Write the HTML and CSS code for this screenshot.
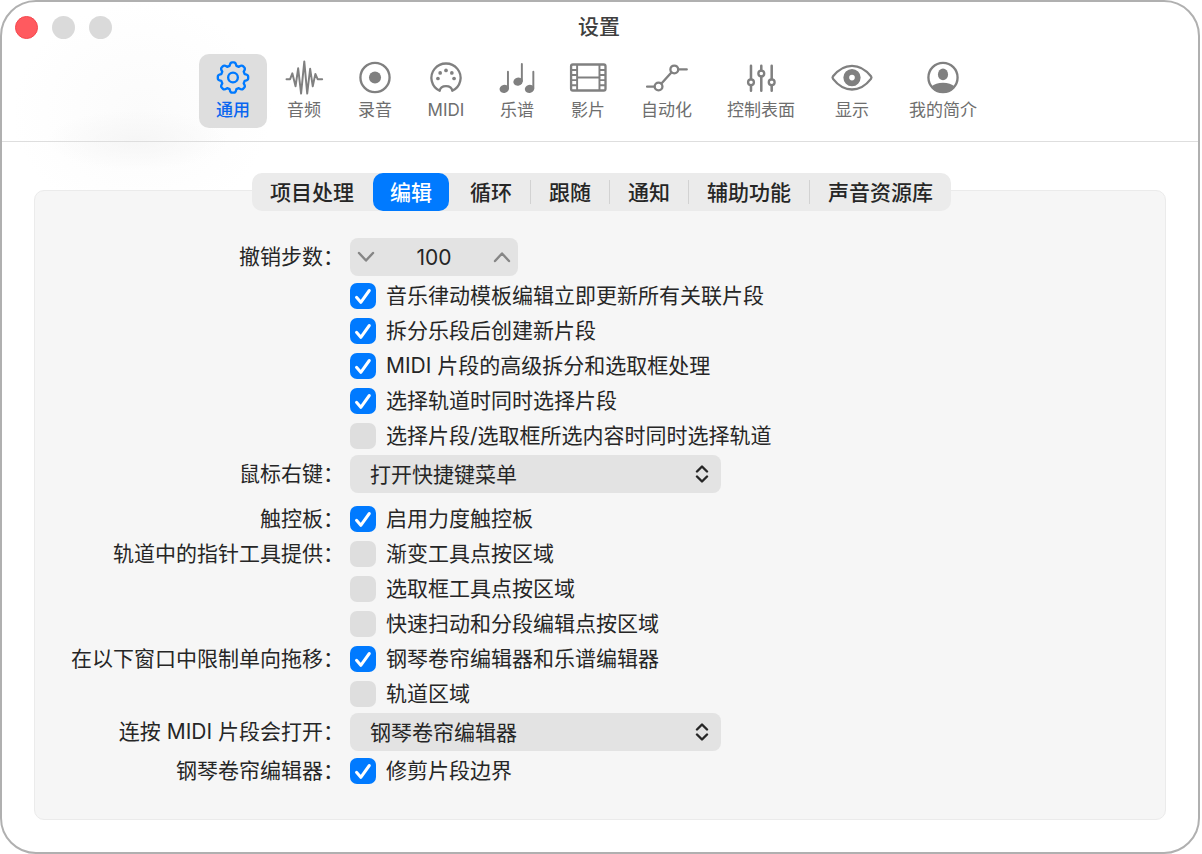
FILE: index.html
```html
<!DOCTYPE html>
<html lang="zh-CN">
<head>
    <meta charset="UTF-8">
    <meta name="viewport" content="width=device-width, initial-scale=1.0">
    <title>设置</title>
    <link rel="stylesheet" href="styles.css">
</head>
<body>
    <div class="window">
        <header class="header">
            <div class="titlebar">
                <div class="lights">
                    <button type="button" class="light close" aria-label="关闭"></button>
                    <button type="button" class="light" aria-label="最小化" disabled></button>
                    <button type="button" class="light" aria-label="缩放" disabled></button>
                </div>
                <h1>设置</h1>
            </div>
            <nav class="toolbar">
                <button type="button" class="tool active">
                    <svg viewBox="0 0 44 36"><g transform="translate(22 18)">
                        <path d="M-3.5-12Q-2.8-15.6-1-15.6L1-15.6Q2.8-15.6 3.5-12L6-11Q9-13 10.3-11.7L11.7-10.3Q13-9 11-6L12-3.5Q15.6-2.8 15.6-1L15.6 1Q15.6 2.8 12 3.5L11 6Q13 9 11.7 10.3L10.3 11.7Q9 13 6 11L3.5 12Q2.8 15.6 1 15.6L-1 15.6Q-2.8 15.6-3.5 12L-6 11Q-9 13-10.3 11.7L-11.7 10.3Q-13 9-11 6L-12 3.5Q-15.6 2.8-15.6 1L-15.6-1Q-15.6-2.8-12-3.5L-11-6Q-13-9-11.7-10.3L-10.3-11.7Q-9-13-6-11Z"/>
                        <circle r="5"/></g></svg>
                    <span>通用</span>
                </button>
                <button type="button" class="tool">
                    <svg viewBox="0 0 44 36"><path d="M4 19.7H7.7L10 13.7 13.3 27 16 8.5 19 34.5 22.3 1.5 25.3 34.5 28.3 9 31 27 33.7 14.3 36 19.7H40.7" stroke-width="2"/></svg>
                    <span>音频</span>
                </button>
                <button type="button" class="tool">
                    <svg viewBox="0 0 44 36"><circle cx="22" cy="18" r="15"/><circle class="fill" cx="22" cy="18" r="6.2"/></svg>
                    <span>录音</span>
                </button>
                <button type="button" class="tool">
                    <svg viewBox="0 0 44 36"><path d="M15.5 31.7A15 14.8 0 1 1 28.5 31.7C27.5 25.2 16.5 25.2 15.5 31.7Z"/>
                        <g class="fill"><circle cx="13.7" cy="19" r="1.9"/><circle cx="16" cy="13.3" r="1.9"/><circle cx="22" cy="10.7" r="1.9"/><circle cx="28" cy="13.3" r="1.9"/><circle cx="30.3" cy="19" r="1.9"/></g></svg>
                    <span>MIDI</span>
                </button>
                <button type="button" class="tool">
                    <svg viewBox="0 0 44 36"><path d="M12.7 12V29M27 4V21.5M38.8 12V29" stroke-width="2"/>
                        <g class="fill"><ellipse cx="8.9" cy="29.7" rx="4.9" ry="4.1" transform="rotate(-15 8.9 29.7)"/><ellipse cx="23.1" cy="22.2" rx="4.9" ry="4.1" transform="rotate(-15 23.1 22.2)"/><ellipse cx="34.9" cy="29.7" rx="4.9" ry="4.1" transform="rotate(-15 34.9 29.7)"/></g></svg>
                    <span>乐谱</span>
                </button>
                <button type="button" class="tool">
                    <svg viewBox="0 0 44 36"><rect x="4.6" y="4.6" width="35.4" height="26.8" rx="1.8"/><path d="M10.8 5V31M33.8 5V31M11 18H34M5 10.3H10.5M5 15.5H10.5M5 20.7H10.5M5 25.9H10.5M34 10.3H39.5M34 15.5H39.5M34 20.7H39.5M34 25.9H39.5" stroke-width="2"/></svg>
                    <span>影片</span>
                </button>
                <button type="button" class="tool">
                    <svg viewBox="0 0 44 36"><path d="M1.5 27.3H9M16.3 24.2 26.5 12.8M33.8 9.7H42.3"/><circle cx="13.3" cy="27.3" r="4"/><circle cx="29.5" cy="9.7" r="4"/></svg>
                    <span>自动化</span>
                </button>
                <button type="button" class="tool">
                    <svg viewBox="0 0 44 36"><path d="M11.7 6V19.7M11.7 26.3V31.5M22.3 6V10.7M22.3 17.3V31.5M33 6V19.7M33 26.3V31.5" stroke-width="2.6"/><circle cx="11.7" cy="23" r="3"/><circle cx="22.3" cy="14" r="3"/><circle cx="33" cy="23" r="3"/></svg>
                    <span>控制表面</span>
                </button>
                <button type="button" class="tool wide">
                    <svg viewBox="0 0 44 36"><path d="M2.5 16.8C8 9.7 15 6 22 6S36 9.7 41.5 16.8Q42.5 18.1 41.5 19.4C36 26.5 29 30.3 22 30.3S8 26.5 2.5 19.4Q1.5 18.1 2.5 16.8Z"/><circle cx="22" cy="18.1" r="5.9" stroke-width="6"/></svg>
                    <span>显示</span>
                </button>
                <button type="button" class="tool">
                    <svg viewBox="0 0 44 36"><circle cx="22" cy="18" r="15"/><g class="fill"><ellipse cx="22" cy="14.8" rx="5.2" ry="6"/><path d="M9.6 27.5C13 24.5 17 23.3 22 23.3S31 24.5 34.4 27.5A15.5 15.5 0 0 1 9.6 27.5Z"/></g></svg>
                    <span>我的简介</span>
                </button>
            </nav>
        </header>

        <nav class="tabs">
            <button type="button" class="tab">项目处理</button>
            <button type="button" class="tab selected">编辑</button>
            <button type="button" class="tab">循环</button>
            <span class="divider"></span>
            <button type="button" class="tab">跟随</button>
            <span class="divider"></span>
            <button type="button" class="tab">通知</button>
            <span class="divider"></span>
            <button type="button" class="tab">辅助功能</button>
            <span class="divider"></span>
            <button type="button" class="tab">声音资源库</button>
        </nav>

        <main class="panel">
            <form class="settings">
                <label class="name" for="undo">撤销步数：</label>
                <div class="stepper">
                    <button type="button" aria-label="减少"><svg viewBox="0 0 18 12"><path d="M2 2 9 9.5 16 2"/></svg></button>
                    <input type="text" id="undo" value="100">
                    <button type="button" aria-label="增加"><svg viewBox="0 0 18 12"><path d="M2 10 9 2.5 16 10"/></svg></button>
                </div>

                <div class="options">
                    <label class="check"><input type="checkbox" checked>音乐律动模板编辑立即更新所有关联片段</label>
                    <label class="check"><input type="checkbox" checked>拆分乐段后创建新片段</label>
                    <label class="check"><input type="checkbox" checked>MIDI 片段的高级拆分和选取框处理</label>
                    <label class="check"><input type="checkbox" checked>选择轨道时同时选择片段</label>
                    <label class="check"><input type="checkbox">选择片段/选取框所选内容时同时选择轨道</label>
                </div>

                <label class="name" for="mouse">鼠标右键：</label>
                <div class="popup">
                    <select id="mouse"><option>打开快捷键菜单</option></select>
                    <svg viewBox="0 0 14 18"><path d="M2 6.5 7 1.5 12 6.5M2 11.5 7 16.5 12 11.5"/></svg>
                </div>

                <span class="name spaced" id="trackpad">触控板：</span>
                <div class="options spaced" role="group" aria-labelledby="trackpad">
                    <label class="check"><input type="checkbox" checked>启用力度触控板</label>
                </div>

                <span class="name" id="pointer">轨道中的指针工具提供：</span>
                <div class="options flush" role="group" aria-labelledby="pointer">
                    <label class="check"><input type="checkbox">渐变工具点按区域</label>
                    <label class="check"><input type="checkbox">选取框工具点按区域</label>
                    <label class="check"><input type="checkbox">快速扫动和分段编辑点按区域</label>
                </div>

                <span class="name" id="limit">在以下窗口中限制单向拖移：</span>
                <div class="options flush" role="group" aria-labelledby="limit">
                    <label class="check"><input type="checkbox" checked>钢琴卷帘编辑器和乐谱编辑器</label>
                    <label class="check"><input type="checkbox">轨道区域</label>
                </div>

                <label class="name" for="midi">连按 MIDI 片段会打开：</label>
                <div class="popup">
                    <select id="midi"><option>钢琴卷帘编辑器</option></select>
                    <svg viewBox="0 0 14 18"><path d="M2 6.5 7 1.5 12 6.5M2 11.5 7 16.5 12 11.5"/></svg>
                </div>

                <span class="name" id="roll">钢琴卷帘编辑器：</span>
                <div class="options" role="group" aria-labelledby="roll">
                    <label class="check"><input type="checkbox" checked>修剪片段边界</label>
                </div>
            </form>
        </main>
    </div>
</body>
</html>
```
FILE: styles.css
```css
* { box-sizing: border-box; }
body { margin: 0; background: #fff; color: #262626; font: 21px/35px Inter, "Noto Sans CJK SC", sans-serif; }
button, input, select { font: inherit; color: inherit; border: none; background: none; margin: 0; padding: 0; }
svg { display: block; fill: none; stroke: currentColor; stroke-width: 2.4; stroke-linecap: round; stroke-linejoin: round; }
.fill { fill: currentColor; stroke: none; }

.window {
    display: flex;
    flex-direction: column;
    min-height: 100vh;
    margin-right: 2px;
    border: 2px solid #b0b0b0;
    border-radius: 36px;
    background: radial-gradient(ellipse 90px 30px at 135px 138px, #f6f6f6, transparent),
        radial-gradient(ellipse 130px 110px at 140px 110px, #fbfbfb, transparent), #fff;
}

.header { border-bottom: 1px solid #dedede; padding-bottom: 13px; }
.titlebar { display: grid; grid-template-columns: 1fr auto 1fr; align-items: center; height: 50px; padding: 0 15px 0 13px; }
.titlebar h1 { margin: 0; padding-bottom: 2px; font-size: 21px; font-weight: 500; color: #404040; }
.lights { display: flex; gap: 14px; }
.light { width: 23px; height: 23px; border-radius: 50%; background: #dadada; }
.light.close { background: #ff5a5f; border: 1px solid #f5474d; }

.toolbar { display: flex; justify-content: center; gap: 3px; padding: 2px 8px 0 0; }
.tool { display: flex; flex-direction: column; align-items: center; gap: 3px; min-width: 68px; height: 74px; padding: 6px 16px; border-radius: 10px; color: #808080; font-size: 17px; line-height: 24px; }
.tool.wide { min-width: 76px; }
.tool svg { width: 44px; height: 36px; margin: 0 -4px; }
.tool span { color: #6e6e6e; white-space: nowrap; }
.tool.active { background: #dedede; color: #007aff; }
.tool.active, .tool:nth-child(-n+6) { padding: 6px 12px; }
.tool.active span { color: #0a66f0; font-weight: 500; }

.tabs { display: flex; align-items: center; align-self: center; height: 38px; margin: 31px 0 -21px 3px; border-radius: 10px; background: #ebebeb; position: relative; z-index: 1; }
.tab { height: 38px; padding: 0 18px; border-radius: 10px; white-space: nowrap; font-weight: 500; }
.tab.selected { background: #007aff; color: #fff; padding: 0 17px; margin: 0 3px 0 1px; }
.divider { width: 1px; height: 24px; background: #d2d2d2; }

.panel { flex: 1; margin: 0 32px 32px; padding: 47px 36px 30px; border: 1px solid #ebebeb; border-radius: 10px; background: #f6f6f6; }
.settings { display: grid; grid-template-columns: max-content 1fr; gap: 2px 6px; }
.name { grid-column: 1; justify-self: end; line-height: 38px; }
.options { grid-column: 2; }
.options.flush { margin-top: -2px; }
.name.spaced, .options.spaced { margin-top: 6px; }
span.name { line-height: 35px; }
.options.flush, span.name { align-self: start; }
#pointer, #limit { margin-top: -2px; }

.check { display: flex; align-items: center; gap: 10px; width: max-content; height: 35px; }
.check input { appearance: none; width: 26px; height: 26px; border-radius: 7px; background: #dedede; }
.check input:checked { background: #007aff url("data:image/svg+xml,%3Csvg xmlns='http://www.w3.org/2000/svg' viewBox='0 0 26 26'%3E%3Cpath d='M6.5 14.3 10.8 19.3 19.3 7.5' fill='none' stroke='white' stroke-width='3' stroke-linecap='round' stroke-linejoin='round'/%3E%3C/svg%3E"); }

.stepper { display: flex; align-items: center; width: 168px; height: 38px; border-radius: 8px; background: #e3e3e3; }
.stepper button { display: flex; align-items: center; justify-content: center; width: 32px; height: 38px; color: #868686; }
.stepper svg { width: 18px; height: 12px; }
.stepper input { flex: 1; min-width: 0; text-align: center; }

.popup { position: relative; width: 371px; height: 38px; }
.popup select { appearance: none; width: 100%; height: 38px; padding: 0 40px 0 20px; border-radius: 8px; background: #e3e3e3; }
.popup svg { position: absolute; right: 12px; top: 10px; width: 14px; height: 18px; pointer-events: none; }
```
